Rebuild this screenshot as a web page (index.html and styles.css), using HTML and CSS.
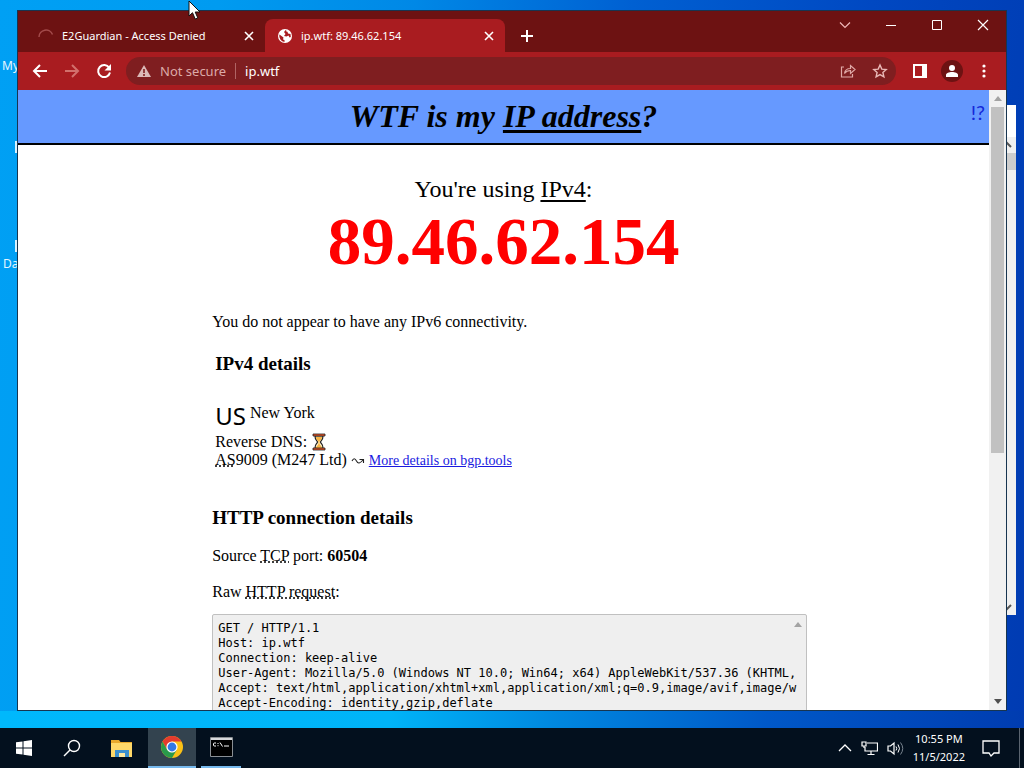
FILE: index.html
```html
<!DOCTYPE html>
<html lang="en">
<head>
<meta charset="utf-8">
<title>ip.wtf: 89.46.62.154</title>
<link rel="stylesheet" href="styles.css">
</head>
<body class="desktop">
<div class="workspace">
  <span class="desk-label label-my">My</span>
  <i class="desk-icon icon-one"></i>
  <i class="desk-icon icon-two"></i>
  <span class="desk-label label-da">Da</span>

  <div class="back-window">
    <div class="back-scroll">
      <svg width="12" height="8" viewBox="0 0 12 8"><path d="M2 7l4-4 4 4" fill="none" stroke="#555" stroke-width="2"/></svg>
      <span class="back-thumb"></span>
      <svg class="push-down" width="12" height="8" viewBox="0 0 12 8"><path d="M2 1l4 4 4-4" fill="none" stroke="#555" stroke-width="2"/></svg>
    </div>
  </div>

  <div class="browser">
    <div class="tabstrip">
      <div class="tab">
        <svg width="16" height="16" viewBox="0 0 16 16"><path d="M1 9a7 7 0 0 1 13.500-2.500" fill="none" stroke="#a34b4b" stroke-width="1.500"/></svg>
        <button class="tab-title">E2Guardian - Access Denied</button>
        <button class="icon-btn tab-close" aria-label="Close tab"><svg width="10" height="10" viewBox="0 0 10 10"><path d="M1 1l8 8M9 1L1 9" stroke="#fff" stroke-width="1.600"/></svg></button>
      </div>
      <div class="tab tab-active">
        <svg width="16" height="16" viewBox="0 0 16 16"><circle cx="8" cy="8" r="7" fill="#fff"/><path d="M2.500 6.500L6.500 9.500 6 11.500 7.500 12 7.500 14 A6 6 0 0 1 2.300 7zM9 1.800L7 4 8.500 6 7 8 9.500 8.500 11.500 7.500 12.500 9.500 13.800 9 13.500 6 11 5.500 10.500 3.800 9.500 3.800z" fill="#a91c20"/></svg>
        <button class="tab-title">ip.wtf: 89.46.62.154</button>
        <button class="icon-btn tab-close" aria-label="Close tab"><svg width="10" height="10" viewBox="0 0 10 10"><path d="M1 1l8 8M9 1L1 9" stroke="#fff" stroke-width="1.600"/></svg></button>
      </div>
      <button class="icon-btn new-tab" aria-label="New tab"><svg width="14" height="14" viewBox="0 0 14 14"><path d="M7 1v12M1 7h12" stroke="#fff" stroke-width="2"/></svg></button>
      <div class="window-controls">
        <button class="icon-btn" aria-label="Search tabs"><svg width="12" height="12" viewBox="0 0 12 12"><path d="M1 3.500l5 5 5-5" fill="none" stroke="#f0b8b8" stroke-width="1.200"/></svg></button>
        <button class="icon-btn" aria-label="Minimize"><svg width="12" height="12" viewBox="0 0 12 12"><path d="M1 6.500h10" stroke="#fff"/></svg></button>
        <button class="icon-btn" aria-label="Maximize"><svg width="12" height="12" viewBox="0 0 12 12"><path d="M1.500 1.500h9v9h-9z" fill="none" stroke="#fff"/></svg></button>
        <button class="icon-btn" aria-label="Close"><svg width="12" height="12" viewBox="0 0 12 12"><path d="M1 1l10 10M11 1L1 11" stroke="#fff" stroke-width="1.200"/></svg></button>
      </div>
    </div>

    <div class="toolbar">
      <button class="icon-btn nav-btn" aria-label="Back"><svg width="16" height="16" viewBox="0 0 16 16"><path d="M15 8H2M8 2L2 8l6 6" fill="none" stroke="#fff" stroke-width="2"/></svg></button>
      <button class="icon-btn nav-btn" aria-label="Forward"><svg width="16" height="16" viewBox="0 0 16 16"><path d="M1 8h13M8 2l6 6-6 6" fill="none" stroke="#d2706c" stroke-width="2"/></svg></button>
      <button class="icon-btn nav-btn" aria-label="Reload"><svg width="16" height="16" viewBox="0 0 16 16"><path d="M13.200 4.800A6 6 0 1 0 14 9.500" fill="none" stroke="#fff" stroke-width="2"/><path d="M15 1v6.500H8.500z" fill="#fff"/></svg></button>
      <div class="omnibox">
        <svg width="16" height="16" viewBox="0 0 16 16"><path d="M8 2l7 12H1z" fill="#dcb9b7"/><path d="M8 6v4M8 11v2" stroke="#7f1e20" stroke-width="1.600"/></svg>
        <span class="security">Not secure</span>
        <span class="divider"></span>
        <input class="address" type="text" value="ip.wtf" aria-label="Address">
        <button class="icon-btn omni-btn" aria-label="Share"><svg width="16" height="16" viewBox="0 0 16 16"><path d="M4 4H1.500v10h11v-3" fill="none" stroke="#e0a9a7" stroke-width="1.200"/><path d="M4.500 10.500c.5-3.500 2.500-5 6-5V2.500l4.500 4-4.500 4v-3c-2.500 0-4.500.8-6 3z" fill="none" stroke="#e0a9a7" stroke-width="1.200"/></svg></button>
        <button class="icon-btn omni-btn" aria-label="Bookmark"><svg width="16" height="16" viewBox="0 0 16 16"><path d="M8 2l1.800 4.100 4.400.4-3.300 3 1 4.400L8 11.600 4.100 13.900l1-4.400-3.300-3 4.400-.4z" fill="none" stroke="#eab9b7" stroke-width="1.400"/></svg></button>
      </div>
      <button class="icon-btn side-btn" aria-label="Side panel"><svg width="14" height="14" viewBox="0 0 14 14"><path d="M0 0h14v14H0zM2 2v10h7V2z" fill="#fff" fill-rule="evenodd"/></svg></button>
      <button class="icon-btn side-btn" aria-label="Profile"><svg width="22" height="22" viewBox="0 0 22 22"><circle cx="11" cy="11" r="11" fill="#6d1212"/><circle cx="11" cy="8" r="3" fill="#fff"/><path d="M5 17v-2c0-2 3-3 6-3s6 1 6 3v2z" fill="#fff"/></svg></button>
      <button class="icon-btn side-btn" aria-label="Menu"><svg width="16" height="16" viewBox="0 0 16 16"><g fill="#fff"><circle cx="8" cy="3" r="1.600"/><circle cx="8" cy="8" r="1.600"/><circle cx="8" cy="13" r="1.600"/></g></svg></button>
    </div>

    <div class="viewport">
      <div class="page">
        <header class="site-header">
          <h1 class="site-title">WTF is my <u class="rule">IP address</u>?</h1>
          <a class="about" href="#about">!?</a>
        </header>
        <main class="content">
          <p class="using">You're using <u class="rule">IPv4</u>:</p>
          <p class="ip">89.46.62.154</p>
          <p class="no-six">You do not appear to have any IPv6 connectivity.</p>
          <section class="details">
            <h3 class="heading">IPv4 details</h3>
            <p class="place"><span class="flag">US</span><span>New York</span></p>
            <p class="line">Reverse DNS: <svg class="hourglass" width="16" height="18" viewBox="0 0 16 18"><path d="M4 3h8c0 4-2 4-2.500 6 .5 2 2.500 2 2.500 6H4c0-4 2-4 2.500-6C6 7 4 7 4 3z" fill="#fff3d0" stroke="#222" stroke-width="1.200"/><path d="M5 4h6c0 3-1.800 3-2.500 5v2l3 4h-7l3-4V9C6.800 7 5 7 5 4z" fill="#f8b545"/><path d="M2 1h12v2H2zM2 15h12v2H2z" fill="#ef5423" stroke="#222" stroke-width=".8"/></svg></p>
            <p class="line"><abbr class="abbr" title="Autonomous System">AS</abbr>9009 (M247 Ltd) <svg class="squiggle" width="14" height="8" viewBox="0 0 14 8"><path d="M1 4c1.500-3 3-3 4.500 0S9 6.500 12 3M8.500 2.500h4v3.500" fill="none" stroke="#222" stroke-width="1.100"/></svg> <a class="more" href="#bgp">More details on bgp.tools</a></p>
          </section>
          <h3 class="heading http">HTTP connection details</h3>
          <p class="block">Source <abbr class="abbr" title="Transmission Control Protocol">TCP</abbr> port: <b>60504</b></p>
          <p class="block">Raw <abbr class="abbr" title="Hypertext Transfer Protocol">HTTP request</abbr>:</p>
          <div class="raw">
            <pre class="raw-text">GET / HTTP/1.1
Host: ip.wtf
Connection: keep-alive
User-Agent: Mozilla/5.0 (Windows NT 10.0; Win64; x64) AppleWebKit/537.36 (KHTML,
Accept: text/html,application/xhtml+xml,application/xml;q=0.9,image/avif,image/w
Accept-Encoding: identity,gzip,deflate</pre>
            <svg class="raw-arrow" width="8" height="5" viewBox="0 0 8 5"><path d="M0 5l4-5 4 5z" fill="#a3a3a3"/></svg>
          </div>
        </main>
      </div>
      <div class="scrollbar">
        <svg width="8" height="5" viewBox="0 0 8 5"><path d="M0 5l4-5 4 5z" fill="#a3a3a3"/></svg>
        <span class="thumb-track"><span class="thumb"></span></span>
        <svg width="8" height="5" viewBox="0 0 8 5"><path d="M0 0l4 5 4-5z" fill="#505050"/></svg>
      </div>
    </div>
  </div>

  <svg class="cursor" width="14" height="21" viewBox="0 0 14 21"><path d="M1 1v15l3.500-3.300L7.200 19l2.600-1.100L7.200 12H12z" fill="#fff" stroke="#111"/></svg>
</div>

<nav class="taskbar">
  <button class="task" aria-label="Start"><svg width="16" height="16" viewBox="0 0 16 16"><path d="M0 2.300L6.500 1.400v6.100H0zM7.500 1.200L16 0v7.500H7.500zM0 8.500h6.500v6.100L0 13.700zM7.500 8.500H16V16l-8.500-1.200z" fill="#fff"/></svg></button>
  <button class="task" aria-label="Search"><svg width="18" height="18" viewBox="0 0 18 18"><circle cx="11" cy="7" r="5.500" fill="none" stroke="#fff" stroke-width="1.400"/><path d="M7 11l-6 6" stroke="#fff" stroke-width="1.500"/></svg></button>
  <button class="task task-files" aria-label="File Explorer"><svg width="22" height="19" viewBox="0 0 22 19"><path d="M0 1h8l1.500 2H21v15H0z" fill="#e9a92d"/><path d="M0 4h21v14H0z" fill="#ffd869"/><path d="M4 18v-7h14v7h-4v-4H8v4z" fill="#3d90cf"/><path d="M8 14h6v4H8z" fill="#ffe9a0"/></svg></button>
  <button class="task task-open task-current" aria-label="Chrome"><svg width="24" height="24" viewBox="0 0 24 24"><circle cx="12" cy="12" r="11" fill="#fbc116"/><path d="M2.500 6.500A11 11 0 0 1 21.500 6.500L12 6.500 7.200 14.700z" fill="#e33b2e"/><path d="M2.500 6.500A11 11 0 0 0 12 23L16.800 14.700 12 17.500 7.200 14.700z" fill="#299a4b"/><circle cx="12" cy="12" r="5.600" fill="#fff"/><circle cx="12" cy="12" r="4.400" fill="#3278e6"/></svg></button>
  <button class="task task-open task-cmd" aria-label="Command Prompt"><svg width="23" height="20" viewBox="0 0 23 20"><path d="M.5.500h22v19H.5z" fill="#000" stroke="#8a8f94"/><path d="M1 1h21v2H1z" fill="#d6d9dc"/><path d="M6 6H4.500Q3.500 6 3.500 7v1Q3.500 9 4.500 9H6M8 6v1M8 8.200v1M10 5.500l2.500 4M14 9h5" fill="none" stroke="#fff"/></svg></button>
  <div class="tray">
    <svg width="14" height="8" viewBox="0 0 14 8"><path d="M1 7l6-6 6 6" fill="none" stroke="#fff" stroke-width="1.300"/></svg>
    <svg width="17" height="15" viewBox="0 0 17 15"><path d="M6 2h10.500v8H4V6M10 10v3.500M6.500 13.500h7" fill="none" stroke="#fff" stroke-width="1.200"/><path d="M1 1h4v4H1zM3 5v2" fill="none" stroke="#fff" stroke-width="1.200"/></svg>
    <svg width="17" height="15" viewBox="0 0 17 15"><path d="M1 5h2.500L7 2v11l-3.500-3H1z" fill="none" stroke="#fff" stroke-width="1.200"/><path d="M9 5.500q1.500 2 0 4M11 3.500q3 4 0 8" fill="none" stroke="#fff"/><path d="M13.500 1.500q4.500 6 0 12" fill="none" stroke="#7a8590"/></svg>
    <div class="clock"><span>10:55 PM</span><span>11/5/2022</span></div>
    <svg class="notify" width="18" height="17" viewBox="0 0 18 17"><path d="M1 1h16v12h-5l-3 3-2-3H1z" fill="none" stroke="#fff" stroke-width="1.300"/></svg>
  </div>
  <button class="show-desktop" aria-label="Show desktop"></button>
</nav>
</body>
</html>
```
FILE: styles.css
```css
* { box-sizing: border-box; }

.desktop {
  margin: 0;
  height: 100vh;
  display: flex;
  flex-direction: column;
  overflow: hidden;
  font-family: "Noto Sans", sans-serif;
  font-size: 11px;
  background: linear-gradient(95deg, #00a0f4 0%, #009bf0 20%, #0088e6 38%, #0060d2 58%, #0048c2 80%, #003bb2 100%);
}

.workspace {
  position: relative;
  flex: 1;
  min-height: 0;
  background: linear-gradient(to right, #00b8fc, #00b4f8 38%, #0088e0 54%, #0058c8 75%, #003cb0) bottom / 100% 17px no-repeat;
}

.desk-label { position: absolute; color: #e6f6ff; font-size: 12px; line-height: 16px; }
.label-my { left: 2px; top: 58px; }
.label-da { left: 3px; top: 256px; }
.desk-icon { position: absolute; left: 15px; width: 3px; height: 12px; background: #d8f2ff; }
.icon-one { top: 141px; }
.icon-two { top: 240px; }

.back-window {
  position: absolute;
  top: 105px;
  right: 8px;
  bottom: 113px;
  width: 200px;
  padding-top: 32px;
  background: #fff;
}
.back-scroll {
  display: flex;
  flex-direction: column;
  align-items: flex-start;
  height: 100%;
  width: 15px;
  margin-left: auto;
  padding: 3px 0;
  background: #f0f0f0;
}
.back-thumb { width: 100%; height: 17px; margin-top: 5px; background: #cdcdcd; }
.push-down { margin-top: auto; }

.browser {
  position: absolute;
  top: 10px;
  left: 17px;
  right: 17px;
  bottom: 17px;
  display: flex;
  flex-direction: column;
  border: 1px solid #173550;
  background: #fff;
}

button { font: inherit; color: inherit; border: 0; padding: 0; margin: 0; background: none; }
svg { display: block; flex: none; }
.icon-btn { display: flex; align-items: center; justify-content: center; flex: none; }

.tabstrip {
  display: flex;
  align-items: flex-end;
  height: 41px;
  background: #6d1212;
  color: #fff;
}
.tab {
  display: flex;
  align-items: center;
  gap: 8px;
  width: 240px;
  height: 33px;
  padding: 0 10px 0 12px;
}
.tab:first-child { width: 247px; padding-left: 20px; }
.tab-active { background: #a91c20; border-radius: 8px 8px 0 0; }
.tab-title { flex: 1; text-align: left; white-space: nowrap; overflow: hidden; }
.tab-close { width: 12px; height: 16px; }
.new-tab { width: 28px; height: 33px; margin-left: 8px; }
.window-controls { display: flex; align-self: flex-start; margin-left: auto; }
.window-controls .icon-btn { width: 46px; height: 28px; }

.toolbar {
  display: flex;
  align-items: center;
  height: 38px;
  padding: 0 6px;
  background: #a91c20;
}
.nav-btn { width: 32px; height: 28px; }
.omnibox {
  display: flex;
  align-items: center;
  flex: 1;
  min-width: 0;
  height: 28px;
  margin: 0 8px 0 6px;
  padding: 0 0 0 10px;
  border-radius: 14px;
  background: #7f1e20;
  color: #fff;
  font-size: 13px;
}
.security { margin-left: 8px; color: #dcaaa8; white-space: nowrap; }
.divider { width: 1px; height: 16px; margin: 0 9px; background: #b06464; }
.address {
  flex: 1;
  min-width: 0;
  padding: 0;
  border: 0;
  outline: 0;
  background: none;
  color: #fff;
  font: inherit;
}
.omni-btn { width: 32px; height: 28px; }
.side-btn { width: 32px; height: 28px; }

.viewport { display: flex; flex: 1; min-height: 0; }
.page {
  flex: 1;
  min-width: 0;
  overflow: hidden;
  background: #fff;
  color: #000;
  font-family: "Liberation Serif", serif;
  font-size: 16px;
  line-height: 18px;
}
.site-header {
  position: relative;
  height: 55px;
  border-bottom: 2px solid #000;
  background: #6699ff;
  text-align: center;
}
.site-title { margin: 0; padding-top: 8px; font-size: 32px; line-height: 36px; font-style: italic; }
.rule { text-decoration-thickness: 2px; text-underline-offset: 3px; text-decoration-skip-ink: none; }
.site-title .rule { text-decoration-thickness: 3px; }
.about {
  position: absolute;
  top: 10px;
  right: 4px;
  color: #1428d8;
  font: 20px/24px Lato, sans-serif;
  text-decoration: none;
}

.content { width: 60%; margin: 0 auto; padding-top: 30px; }
.content p { margin: 0; }
.content .using { font-size: 24px; line-height: 28px; text-align: center; }
.content .ip { color: #f00; font-size: 67px; font-weight: bold; line-height: 76px; text-align: center; }
.content .no-six { margin-top: 34px; }
.details { padding: 22px 3px 0; }
.heading { margin: 0; font-size: 19px; line-height: 22px; }
.content .place { display: flex; gap: 4px; margin-top: 29px; height: 29px; }
.flag { font: 24px/24px "Noto Sans", sans-serif; }
.hourglass, .squiggle { display: inline-block; vertical-align: middle; }
.hourglass { margin-top: -2px; }
.line { height: 18px; }
.abbr { text-decoration: underline dotted; text-decoration-skip-ink: none; }
.more { color: #1a1ae0; font-size: 14px; }
.http { margin-top: 38px; }
.content .block { margin-top: 18px; }

.raw {
  position: relative;
  width: calc(100% + 12px);
  height: 200px;
  margin-top: 13px;
  padding: 6px 5px;
  border: 1px solid #c0c0c0;
  border-radius: 2px;
  background: #efefef;
}
.raw-text {
  margin: 0;
  overflow: hidden;
  font: 12px/15px "DejaVu Sans Mono", monospace;
}
.raw-arrow { position: absolute; top: 7px; right: 4px; }

.scrollbar {
  display: flex;
  flex-direction: column;
  align-items: center;
  width: 17px;
  padding: 6px 0;
  background: #f1f1f1;
}
.thumb-track { flex: 1; width: 13px; padding: 6px 0; }
.thumb { display: block; height: 59%; background: #c1c1c1; }

.cursor { position: absolute; left: 188px; top: 0; }

.taskbar {
  display: flex;
  height: 40px;
  background: #03101e;
  color: #fff;
}
.task { display: flex; align-items: center; justify-content: center; width: 48px; height: 40px; }
.task-files { width: 52px; }
.task-current { background: #33434f; }
.task-open { border-bottom: 2px solid #76b9ed; }
.task-cmd { width: 40px; margin-left: 5px; }
.tray { display: flex; align-items: center; gap: 9px; margin-left: auto; padding-right: 19px; }
.clock { display: flex; flex-direction: column; align-items: center; line-height: 18px; white-space: nowrap; }
.notify { margin-left: 8px; }
.show-desktop { width: 5px; height: 40px; border-left: 1px solid #5a6470; }
```
